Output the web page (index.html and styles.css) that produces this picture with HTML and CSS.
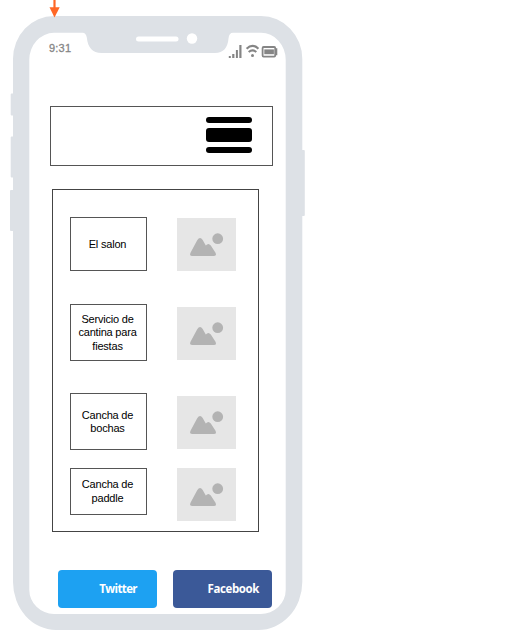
FILE: index.html
```html
<!DOCTYPE html>
<html lang="es">
<head>
<meta charset="utf-8">
<title>Club</title>
<link rel="stylesheet" href="styles.css">
</head>
<body>
<svg class="frame" width="527" height="642" viewBox="0 0 527 642" aria-hidden="true">
  <g fill="#dde1e6">
    <rect x="10.7" y="93.5" width="6" height="22" rx="1"/>
    <rect x="10.7" y="136.5" width="6" height="41" rx="1"/>
    <rect x="10" y="190" width="6" height="41" rx="1"/>
    <rect x="298" y="150" width="6.8" height="66" rx="1"/>
    <path d="M54 16H261A41.5 43 0 0 1 302.3 59V582A44 48 0 0 1 258 630H56A43 48 0 0 1 13 582V59A41 43 0 0 1 54 16Z"/>
  </g>
  <path fill="#fff" d="M54 32.8H82.5Q86 32.8 86.8 37.5C87.8 47.5 92.5 53 101.5 53H215C223.5 53 227.8 47.5 228.5 38.5Q229 32.8 233 32.8H261A24.5 27 0 0 1 285.7 59.8V590A25 24 0 0 1 260.5 614H54A25 24 0 0 1 29.3 590V59.8A25 27 0 0 1 54 32.8Z"/>
  <rect x="136" y="36.5" width="42.5" height="5" rx="2.5" fill="#fff"/>
  <circle cx="192" cy="38.5" r="5.2" fill="#fff"/>
  <path d="M54.5 0V9" stroke="#ff6726" stroke-width="2.2"/>
  <path d="M49.5 7.3H59.7L54.5 17.5Z" fill="#ff6726"/>
</svg>
<svg width="0" height="0" class="symbols" aria-hidden="true">
  <symbol id="photo" viewBox="0 0 59 53">
    <circle cx="40.7" cy="20.7" r="5.4"/>
    <path d="M13.5 34.8 20.2 22.2Q23 17.8 25.7 22L28.8 27.6Q31.4 24.2 33.8 27.6L38.500 34.800Q40 38 37 38H15.500Q12 38 13.500 34.800Z"/>
  </symbol>
</svg>
<main class="screen">
  <div class="status">
    <span class="time">9:31</span>
    <svg class="signals" width="51" height="17" viewBox="0 0 51 17" fill="none" stroke="#858585">
      <g fill="#858585" stroke="none">
        <rect x=".8" y="12" width="2" height="2"/>
        <rect x="4.2" y="10" width="2.2" height="4"/>
        <rect x="7.9" y="6" width="2" height="8"/>
        <rect x="11.3" y="1" width="2.2" height="13"/>
        <circle cx="24.5" cy="11.5" r="1.5"/>
        <rect x="36.3" y="5.4" width="9.6" height="4.8"/>
      </g>
      <path stroke-width="2.2" d="M18.600 4.700Q24.500-1 30.400 4.700M20.700 8Q24.500 4.700 28.300 8"/>
      <rect x="34.600" y="3" width="12.600" height="9.600" rx="1" stroke-width="1.800"/>
      <path stroke-width="1.600" d="M47.500 5H48.500V10.400H47.500"/>
    </svg>
  </div>
  <header class="topbar">
    <div class="menu"><span class="bar"></span><span class="bar thick"></span><span class="bar"></span></div>
  </header>
  <section class="places">
    <div class="labels">
      <div class="label first">El salon</div>
      <div class="label second">Servicio de<br>cantina para<br>fiestas</div>
      <div class="label third">Cancha de<br>bochas</div>
      <div class="label fourth">Cancha de<br>paddle</div>
    </div>
    <div class="photos">
      <svg class="photo"><use href="#photo"/></svg>
      <svg class="photo"><use href="#photo"/></svg>
      <svg class="photo"><use href="#photo"/></svg>
      <svg class="photo last"><use href="#photo"/></svg>
    </div>
  </section>
  <footer class="social">
    <div class="button twitter">Twitter</div>
    <div class="button facebook">Facebook</div>
  </footer>
</main>
</body>
</html>
```
FILE: styles.css
```css
* { box-sizing: border-box; }
body {
  margin: 0;
  background: #fff;
  font-family: "Liberation Sans", Arial, sans-serif;
  overflow: hidden;
}
.frame { position: absolute; top: 0; left: 0; }
.symbols { display: block; }
.screen {
  position: relative;
  width: 286px;
  height: 642px;
  padding-top: 40px;
}
.status {
  display: flex;
  justify-content: space-between;
  height: 66px;
  padding: 0 7px 0 49px;
}
.time {
  color: #858585;
  font-size: 11px;
  line-height: 16px;
  letter-spacing: 0.2px;
  -webkit-text-stroke: 0.3px #858585;
}
.signals { margin-top: 4px; }
.topbar {
  display: flex;
  justify-content: flex-end;
  width: 223px;
  height: 60px;
  margin-left: 50px;
  padding: 10px 20px 0 0;
  border: 1px solid #555;
}
.menu {
  display: flex;
  flex-direction: column;
  gap: 5px;
  width: 46px;
}
.bar { height: 6px; border-radius: 3px; background: #000; }
.thick { height: 14px; }
.places {
  display: flex;
  gap: 31px;
  width: 207px;
  height: 343px;
  margin: 23px 0 0 52px;
  padding: 28px 0 0 18px;
  border: 1px solid #444;
}
.labels { width: 76px; margin: -1px 0 0 -1px; }
.label {
  display: flex;
  align-items: center;
  justify-content: center;
  width: 77px;
  padding-right: 2px;
  border: 1px solid #555;
  font-size: 11px;
  line-height: 13.5px;
  letter-spacing: -0.2px;
  text-align: center;
}
.first { height: 54px; padding-top: 2px; }
.second { height: 57px; margin-top: 33px; padding-top: 1px; }
.third { height: 57px; margin-top: 32px; padding-top: 1px; }
.fourth { height: 47px; margin-top: 18px; }
.photos { width: 59px; }
.photo {
  display: block;
  width: 59px;
  height: 53px;
  margin-bottom: 36px;
  background: #e6e6e6;
  fill: #b3b3b3;
}
.photo.last { margin-top: -17px; }
.social {
  display: flex;
  gap: 16px;
  margin: 38px 0 0 58px;
}
.button {
  width: 99px;
  height: 38px;
  border-radius: 4px;
  color: #fff;
  font-family: "Open Sans", sans-serif;
  font-size: 11.5px;
  font-weight: 700;
  line-height: 38px;
  letter-spacing: -0.4px;
  text-align: right;
}
.twitter { padding-right: 20px; background: #1da1f2; letter-spacing: -0.6px; }
.facebook { padding-right: 13px; background: #3b5998; }
```
